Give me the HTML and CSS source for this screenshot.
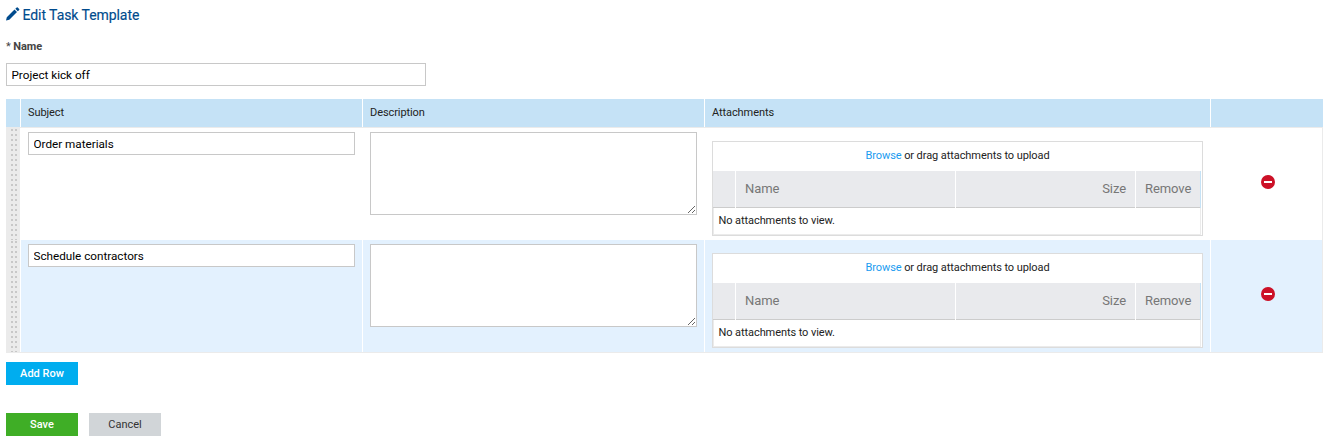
FILE: index.html
```html
<!DOCTYPE html>
<html lang="en">
<head>
<meta charset="utf-8">
<title>Edit Task Template</title>
<link rel="stylesheet" href="styles.css">
</head>
<body>
<h1 class="title">
<svg class="pencil" viewBox="0 0 14 14"><path d="M0 13.500 L.8 10.300 L8.500 2.600 L11 5.100 L3.300 12.700 Z M9.300 1.800 L10.700 .4 Q11.200 0 11.700 .4 L13.200 1.900 Q13.600 2.400 13.200 2.900 L11.800 4.300 Z"/></svg>
<span>Edit Task Template</span>
</h1>
<label class="label" for="name"><span class="star">*</span> Name</label>
<input class="input name-input" id="name" value="Project kick off">
<div class="table">
  <div class="row head">
    <div class="cell"></div><div class="cell">Subject</div><div class="cell">Description</div><div class="cell">Attachments</div><div class="cell"></div>
  </div>
  <div class="row">
    <div class="cell handle"></div>
    <div class="cell"><input class="input" value="Order materials"></div>
    <div class="cell"><textarea class="area"></textarea></div>
    <div class="cell">
      <div class="files">
        <div class="drop"><a class="link">Browse</a> or drag attachments to upload</div>
        <div class="files-head"><span></span><span>Name</span><span class="right">Size</span><span>Remove</span></div>
        <div class="empty">No attachments to view.</div>
      </div>
    </div>
    <div class="cell action"><svg class="remove" viewBox="0 0 14 14"><circle cx="7" cy="7" r="7"/><rect x="3" y="6" width="8" height="2"/></svg></div>
  </div>
  <div class="row alt">
    <div class="cell handle"></div>
    <div class="cell"><input class="input" value="Schedule contractors"></div>
    <div class="cell"><textarea class="area"></textarea></div>
    <div class="cell">
      <div class="files">
        <div class="drop"><a class="link">Browse</a> or drag attachments to upload</div>
        <div class="files-head"><span></span><span>Name</span><span class="right">Size</span><span>Remove</span></div>
        <div class="empty">No attachments to view.</div>
      </div>
    </div>
    <div class="cell action"><svg class="remove" viewBox="0 0 14 14"><circle cx="7" cy="7" r="7"/><rect x="3" y="6" width="8" height="2"/></svg></div>
  </div>
</div>
<button class="btn add">Add Row</button>
<div class="buttons"><button class="btn save">Save</button><button class="btn cancel">Cancel</button></div>
</body>
</html>
```
FILE: styles.css
```css
* { box-sizing: border-box; }
body {
  margin: 0;
  padding: 7px 10px 0 6px;
  background: #fff;
  color: #222;
  font: 11px/16px Roboto, sans-serif;
  letter-spacing: -.08px;
  overflow: hidden;
}
.title {
  display: flex;
  gap: 2.5px;
  height: 16px;
  margin: 0;
  color: #004b8d;
  font-size: 14px;
  font-weight: 400;
  letter-spacing: -.06px;
  -webkit-text-stroke: .15px #004b8d;
}
.pencil { width: 14px; height: 14px; fill: #004b8d; }
.label {
  display: block;
  height: 16px;
  margin: 16px 0 8px;
  color: #444;
  font-weight: 700;
}
.star { font-weight: 400; }
.input {
  display: block;
  width: 100%;
  height: 23px;
  padding: 0 4.5px;
  border: 1px solid #c8c8c8;
  border-radius: 0;
  background: #fff;
  color: #000;
  font: 11.7px Roboto, sans-serif;
}
.name-input { width: 420px; }
.area {
  display: block;
  width: 100%;
  height: 83px;
  border: 1px solid #c8c8c8;
  border-radius: 0;
  background: #fff;
}
.table {
  width: 1317px;
  margin-top: 13px;
  border-bottom: 1px solid #ebebeb;
}
.row {
  display: grid;
  grid-template-columns: 14px 341px 341px 505px 112px;
  column-gap: 1px;
  height: 112px;
}
.cell { padding: 4px 7px 0; }
.head { height: 29px; border-bottom: 1px solid #ebebeb; }
.head .cell { padding-top: 6px; background: #c5e2f6; }
.alt .cell { background: #e3f1fe; }
.row .handle {
  background: #ebebeb url("data:image/svg+xml,%3Csvg xmlns='http://www.w3.org/2000/svg' width='14' height='5'%3E%3Cpath d='M5 1h2v2h-2zM9 1h2v2h-2z' fill='%23c8c8c8'/%3E%3C/svg%3E") repeat-y;
}
.files {
  height: 95px;
  margin-top: 9px;
  border: 1px solid #dcdcdc;
  background: #fff;
  width: 491px;
}
.drop { height: 29px; padding-top: 6px; text-align: center; }
.link { color: #1a9cf0; }
.files-head {
  display: grid;
  grid-template-columns: 22px 219px 179px 64px;
  column-gap: 1px;
  width: 488px;
  border-right: 1px solid #c5e2f6;
  color: #777;
  font-size: 13px;
  line-height: 36px;
}
.files-head span { height: 37px; padding: 0 9px; background: #e9eaed; border-bottom: 1px solid #ccc; }
.files-head .right { text-align: right; }
.empty {
  width: 488px;
  height: 27px;
  padding: 5px 4.5px;
  border: solid #ebebeb;
  border-width: 0 1px 1px;
}
.row .action { padding: 47px 0 0 50px; border-right: 1px solid #ebebeb; }
.remove { display: block; width: 14px; height: 14px; fill: #cc1127; }
.remove rect { fill: #fff; }
.btn {
  display: block;
  width: 72px;
  height: 23px;
  padding: 0;
  border: 0;
  color: #fff;
  font: 500 11px Roboto, sans-serif;
}
.add { margin-top: 9px; background: #00adef; }
.buttons { display: flex; gap: 11px; margin-top: 28px; }
.save { background: #3fae26; }
.cancel { background: #d1d5d8; color: #333; font-weight: 400; }
```
